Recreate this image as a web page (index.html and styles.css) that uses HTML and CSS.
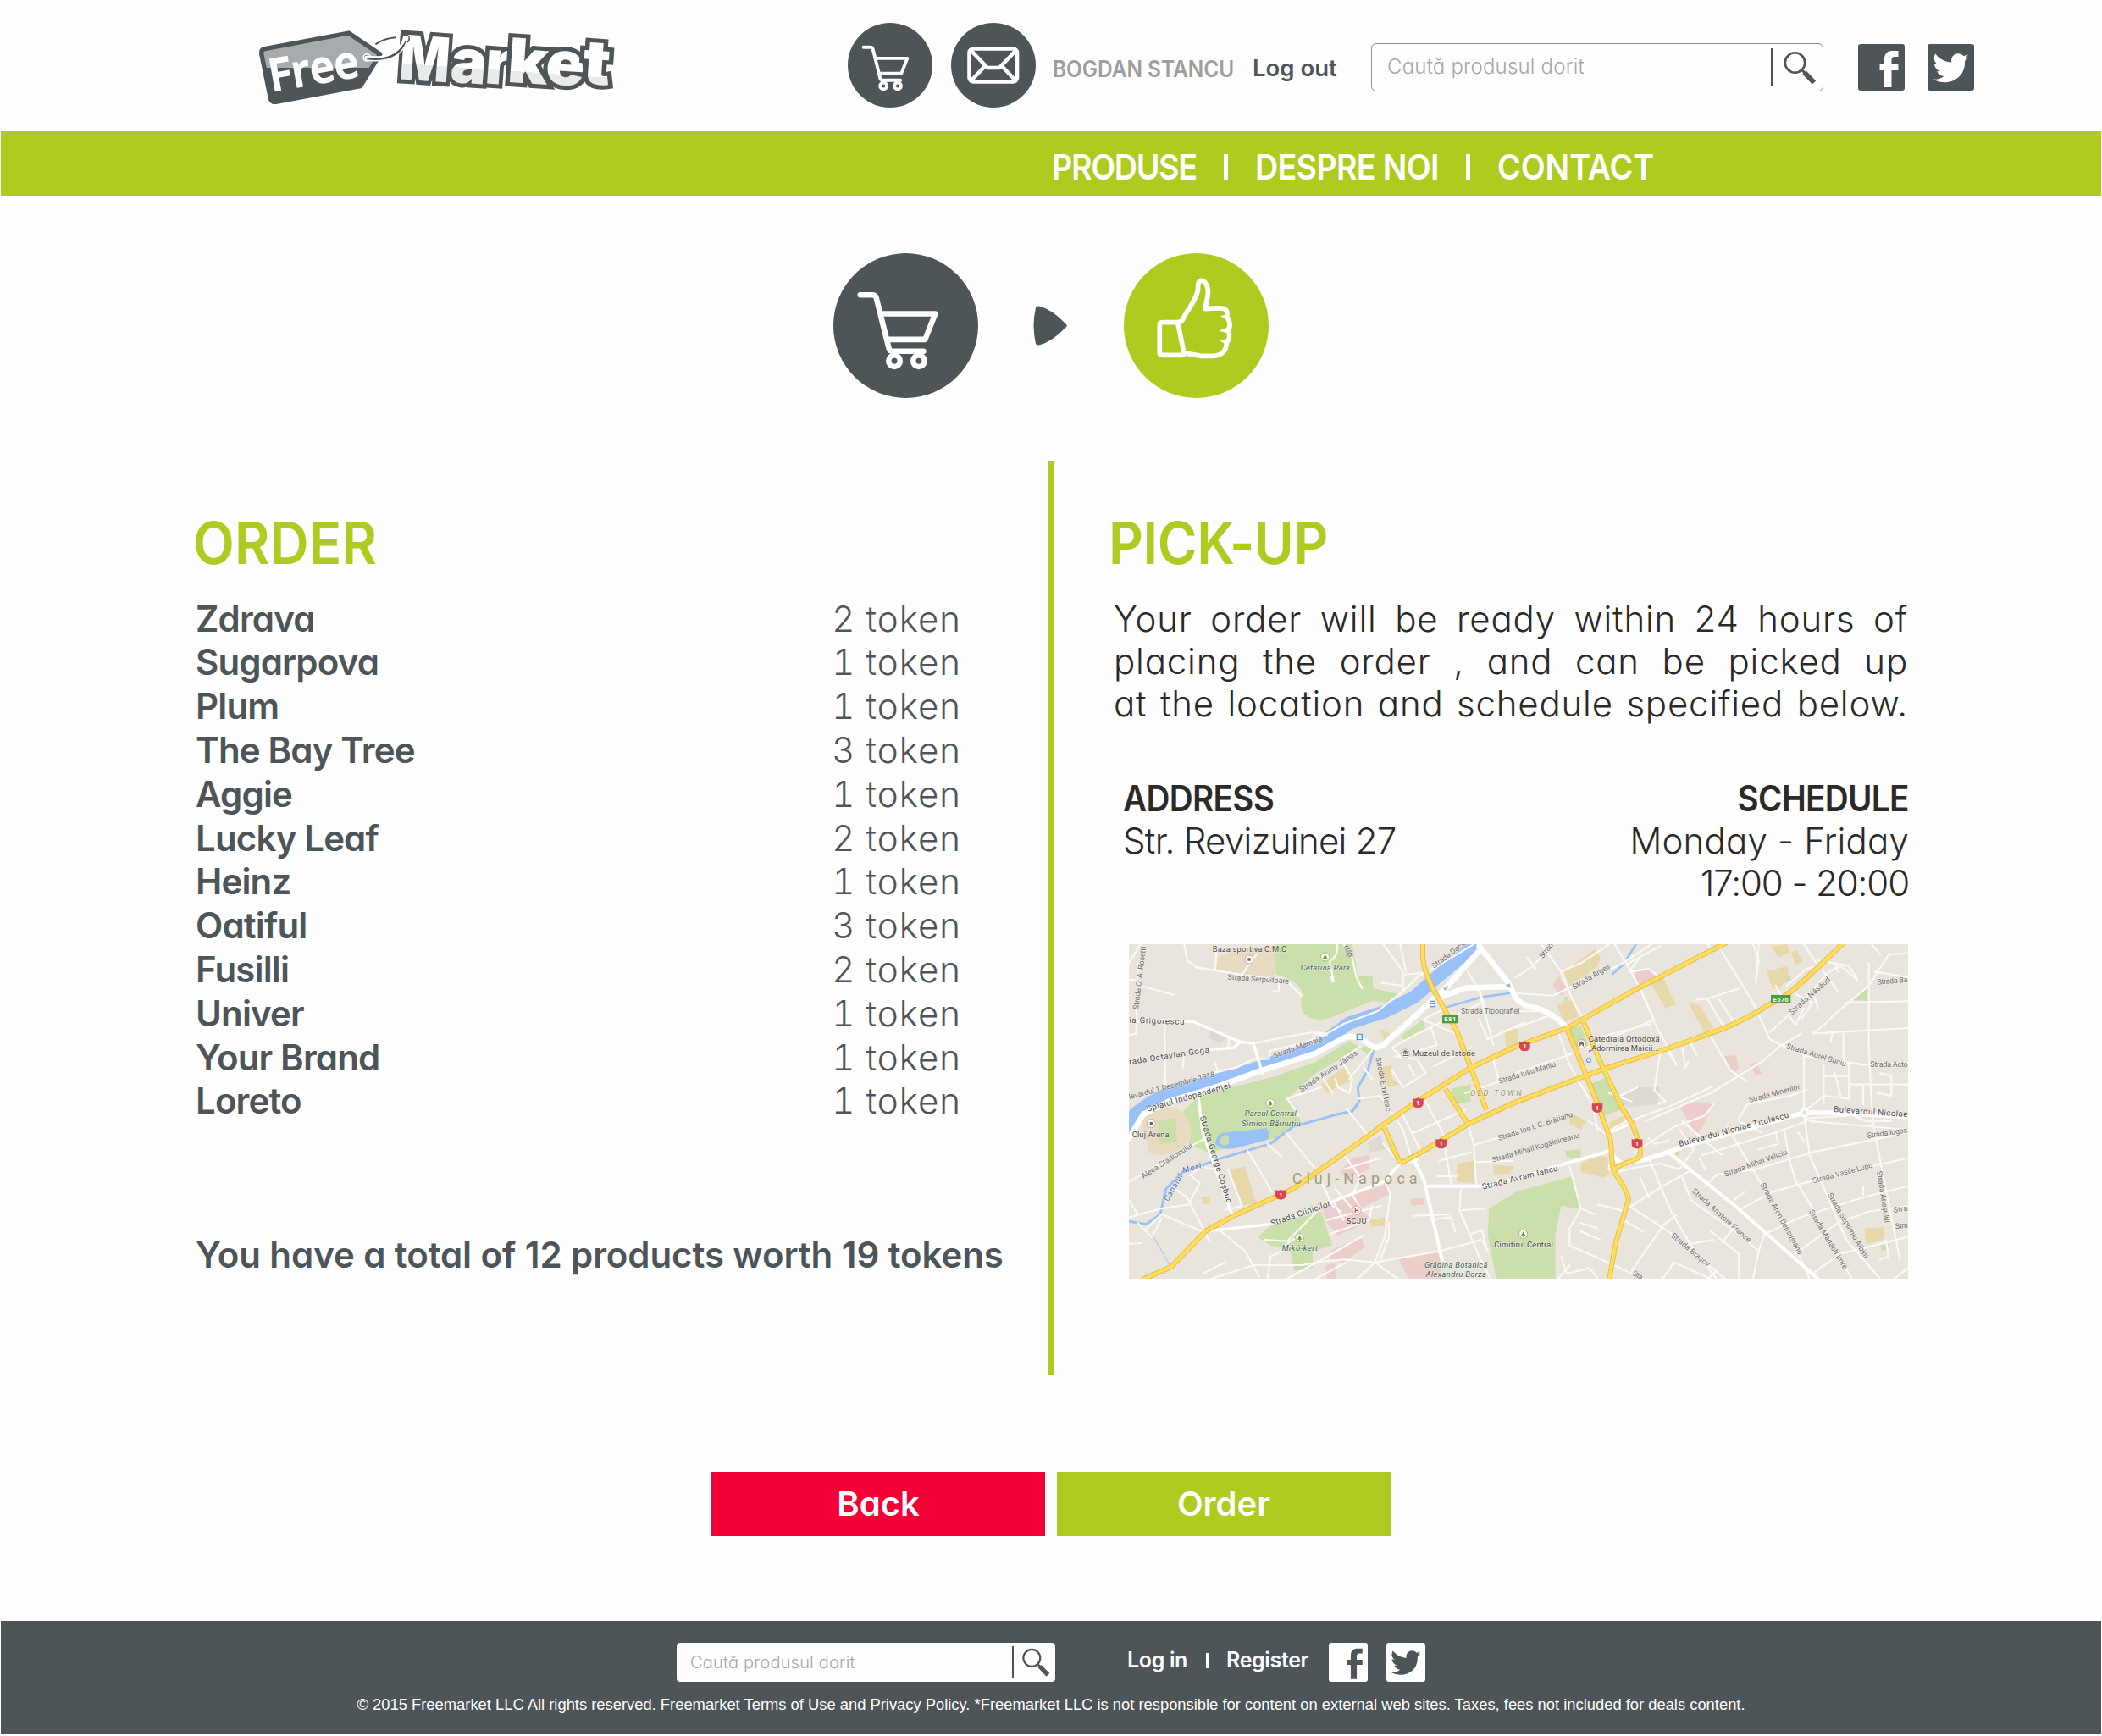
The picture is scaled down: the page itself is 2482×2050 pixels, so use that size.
FILE: index.html
```html
<!DOCTYPE html>
<html lang="ro">
<head>
<meta charset="utf-8">
<title>FreeMarket</title>
<link rel="stylesheet" href="styles.css">
</head>
<body>
<svg class="defs" width="0" height="0" aria-hidden="true">
  <symbol id="cart" viewBox="0 0 172 172">
    <g fill="none" stroke="#fefefe" stroke-width="6.6" stroke-linecap="round" stroke-linejoin="round">
      <path d="M32 49.500H46Q50 49.500 51 53L66 113Q67 116.500 71 116.500H107M59 72H121L109 102.500H65"/>
      <circle cx="72.500" cy="128" r="6.800"/><circle cx="101.500" cy="128" r="6.800"/>
    </g>
  </symbol>
  <symbol id="loupe" viewBox="0 0 40 40">
    <circle cx="14.500" cy="14" r="11.700" fill="none" stroke="#4e5558" stroke-width="2.600"/>
    <path d="M22.500 22.500L26 26" stroke="#4e5558" stroke-width="3"/>
    <path d="M25.500 25.500L37 37.500" stroke="#4e5558" stroke-width="6"/>
  </symbol>
  <symbol id="facebook" viewBox="0 0 55 55">
    <path d="M31 51V31H25.500V24H31V18C31 11 35 8 40.500 8H47.500V15H43C40.500 15 39.500 16.500 39.500 19V24H47.500V31H39.500V51Z"/>
  </symbol>
  <symbol id="twitter" viewBox="0 0 55 55">
    <path d="M48 15.500C46.500 16.200 45.500 16.500 44.300 16.700C46 15.500 46.800 14.200 47.500 12.200C45.800 13.200 44.500 13.700 42.500 14.100C36 7.500 26.500 13 28.300 21.500C20.500 21 14.500 17.500 9.200 11.500C6.500 16.500 7.700 20.800 11.700 24C10.500 24 9 23.500 7.900 22.800C8 27 10.500 30.500 15 31.800C13.500 32.200 12.500 32.200 11.200 32C12.500 35.500 15.500 37.800 19.300 38C15.500 41 11.500 42 6.500 41.600C22 50.500 45 42.500 44 20C45.700 18.700 47 17.300 48 15.500Z"/>
  </symbol>
</svg>

<header class="top">
  <svg class="logo" viewBox="0 0 1440 390">
    <defs>
      <linearGradient id="shine" gradientUnits="userSpaceOnUse" x1="0" y1="90" x2="0" y2="310">
        <stop offset=".48" stop-color="#fefefe"/><stop offset=".48" stop-color="#e9ebeb"/>
      </linearGradient>
      <linearGradient id="tag" gradientUnits="userSpaceOnUse" x1="0" y1="80" x2="0" y2="340">
        <stop offset=".5" stop-color="#a6abad"/><stop offset=".5" stop-color="#4e5558"/>
      </linearGradient>
    </defs>
    <path d="M86 160Q84 146 98 143L395 87L506 162L437 275L137 331Q121 333 118 318Z" fill="url(#tag)" stroke="#4e5558" stroke-width="16" stroke-linejoin="round"/>
    <g class="logo-free" transform="rotate(-10 130 290)"><text x="122" y="293" textLength="320" lengthAdjust="spacingAndGlyphs">Free</text></g>
    <path d="M490 127Q520 106 562 103" fill="none" stroke="#4e5558" stroke-width="6"/>
    <g class="logo-market" transform="translate(-1 -2) rotate(4 575 250)">
      <text y="252"><tspan x="573" textLength="178" lengthAdjust="spacingAndGlyphs">M</tspan></text>
      <text y="250"><tspan x="754" textLength="128" lengthAdjust="spacingAndGlyphs">a</tspan></text>
      <text y="246"><tspan x="877" textLength="90" lengthAdjust="spacingAndGlyphs">r</tspan></text>
      <text y="236"><tspan x="955" textLength="143" lengthAdjust="spacingAndGlyphs">k</tspan></text>
      <text y="232"><tspan x="1090" textLength="138" lengthAdjust="spacingAndGlyphs">e</tspan></text>
      <text y="222"><tspan x="1222" textLength="97" lengthAdjust="spacingAndGlyphs">t</tspan></text>
    </g>
    <circle cx="460" cy="174" r="15" fill="#fefefe"/><circle cx="460" cy="174" r="10" fill="#4e5558"/>
    <circle cx="595" cy="107" r="17" fill="#4e5558"/><circle cx="597" cy="106" r="10" fill="#fefefe"/>
    <path d="M460 176C530 185 580 165 597 106" fill="none" stroke="#fefefe" stroke-width="19" stroke-linecap="round"/>
    <path d="M460 177C530 185 580 165 595 115" fill="none" stroke="#4e5558" stroke-width="8"/>
    <path d="M454 172C530 181 575 155 597 106" fill="none" stroke="#fefefe" stroke-width="6"/>
  </svg>
  <a class="round"><svg viewBox="0 0 172 172"><use href="#cart"/></svg></a>
  <a class="round round-mail"><svg viewBox="0 0 100 100">
    <g fill="none" stroke="#fefefe" stroke-width="4.600" stroke-linejoin="round">
      <rect x="21.500" y="30.500" width="56.500" height="39" rx="5"/>
      <path d="M23 32L43 53H57L77 32M23 69L40 51M77 69L60 51"/>
    </g></svg></a>
  <span class="user caps">BOGDAN STANCU</span>
  <a class="logout">Log out</a>
  <div class="search"><span>Caută produsul dorit</span><i></i><svg><use href="#loupe"/></svg></div>
  <a class="social"><svg><use href="#facebook"/></svg></a>
  <a class="social"><svg><use href="#twitter"/></svg></a>
</header>

<nav class="menu">
  <span class="m1"><a class="caps">PRODUSE</a></span><i></i><span class="m2"><a class="caps">DESPRE NOI</a></span><i></i><span class="m3"><a class="caps">CONTACT</a></span>
</nav>

<main>
  <div class="steps">
    <div class="step"><svg viewBox="0 0 172 172"><use href="#cart"/></svg></div>
    <svg class="arrow" viewBox="0 0 40 47"><path d="M3 2Q4 0 7 .5Q22 4 39 22Q40.500 23.500 39 25Q22 43 7 46.500Q4 47 3 45Q-2 24 3 2Z" fill="#4e5558"/></svg>
    <div class="step step-done"><svg viewBox="0 0 172 172">
      <g fill="none" stroke="#fefefe" stroke-width="5.800" stroke-linejoin="round">
        <path d="M64 82H46Q42.500 82 42.500 85.500V117.500Q42.500 121 46 121H69Q72 121 71.300 118Z"/>
        <path d="M64 82Q69 82 71 77C75 67 84 60 88 44C88 37 88 32.500 92.500 32.500C98 33 100 41 100 46C100 54 97 60 97 66C103 65.500 112 65 117 65.500C122 66 124 70 122 76C126 79 127 87 124 91.500C126 97 125.500 103 122 106C122 115 117 121.500 106 122H92L72 118.500"/>
      </g>
      <path d="M117 75L122 74V78ZM116 92L124 89V94ZM116 104L122 103V108Z" fill="#fefefe" stroke="#fefefe" stroke-width="2"/>
    </svg></div>
  </div>

  <div class="columns">
    <section class="order">
      <h2 class="caps">ORDER</h2>
      <ul>
        <li><b>Zdrava</b><span>2 token</span></li>
        <li><b>Sugarpova</b><span>1 token</span></li>
        <li><b>Plum</b><span>1 token</span></li>
        <li><b>The Bay Tree</b><span>3 token</span></li>
        <li><b>Aggie</b><span>1 token</span></li>
        <li><b>Lucky Leaf</b><span>2 token</span></li>
        <li><b>Heinz</b><span>1 token</span></li>
        <li><b>Oatiful</b><span>3 token</span></li>
        <li><b>Fusilli</b><span>2 token</span></li>
        <li><b>Univer</b><span>1 token</span></li>
        <li><b>Your Brand</b><span>1 token</span></li>
        <li><b>Loreto</b><span>1 token</span></li>
      </ul>
      <p class="total">You have a total of 12 products worth 19 tokens</p>
    </section>
    <section class="pickup">
      <h2 class="caps">PICK-UP</h2>
      <p class="note">Your order will be ready within 24 hours of<br>placing the order , and can be picked up<br>at the location and schedule specified below.</p>
      <div class="where">
        <div><b class="caps">ADDRESS</b><span class="street">Str. Revizuinei 27</span></div>
        <div class="when"><b class="caps">SCHEDULE</b><span>Monday - Friday</span><span class="hours">17:00 - 20:00</span></div>
      </div>
      <svg class="map" viewBox="39 33 2760 1185" preserveAspectRatio="none">
        <rect x="39" y="33" width="2760" height="1185" fill="#e9e5dd"/>

        <!-- parks -->
        <g fill="#cadfaa">
          <path d="M555 33H830L850 145H903V190L1000 210L960 240L900 235L760 290Q700 315 660 280Q640 250 655 210Q640 160 560 140Z"/>
          <path d="M290 570L560 500L700 450L820 375L860 400L700 490L600 580L650 660L560 720L320 770L250 740L260 690L230 625Z"/>
          <path d="M1000 360L1080 300L1090 335L1020 375ZM855 400L895 390L920 400L890 430Z"/>
          <path d="M140 655L205 650L210 730L150 745Z"/>
          <path d="M495 1070L540 1030L720 980L760 1100L690 1120V1180L625 1190L610 1110L540 1100Z"/>
          <path d="M1315 970L1410 910L1610 855L1640 970L1570 960L1550 1060V1218H1340L1310 1060Z"/>
          <path d="M1600 330L1640 320L1670 400L1610 390ZM1670 530L1740 500L1780 620L1720 640Z"/>
          <path d="M1590 235L1575 225L1595 245ZM1640 115L1655 108L1675 130L1655 145ZM1575 225L1590 218L1600 238L1585 248ZM2360 150L2380 145L2385 160L2350 175ZM2600 230L2660 185V235Z"/>
          <path d="M1180 545L1250 530V590L1200 600ZM1585 765L1640 760L1638 790L1590 792ZM1970 770L1990 760L1985 785ZM2700 1100L2730 1095L2725 1115L2705 1118Z"/>
        </g>
        <g fill="#e8dac0">
          <path d="M355 80L400 60L555 40V150L440 140L345 130Z"/>
          <path d="M80 660Q150 580 230 630Q280 690 240 740Q180 800 110 770Z"/>
        </g>
        <path d="M140 655L205 650L210 730L150 745Z" fill="#cadfaa"/>
        <g fill="#e6d8a8">
          <path d="M720 530L800 470L830 510L740 560ZM925 330L965 350L945 375ZM930 470L970 460V510L1000 530L960 540L930 500ZM1370 350L1415 330L1420 390L1375 400Z"/>
          <path d="M390 835L450 820L490 950L440 960ZM295 930L325 925L330 950L305 955ZM890 1010L945 1000V1030L900 1035ZM1200 810L1260 800L1265 880L1200 875ZM1330 815L1400 820L1390 845L1330 850Z"/>
          <path d="M1580 130L1690 50L1710 80L1700 110L1600 180ZM1555 250L1610 230L1630 290L1580 310ZM1880 160L1930 150L1975 245L1940 260ZM2020 240L2060 250L2110 330L2080 350Z"/>
          <path d="M2315 40L2370 33L2380 60L2340 80ZM2385 60L2405 55L2425 95L2400 110ZM2300 130L2370 110L2380 130L2340 200L2310 170Z"/>
          <path d="M1640 810L1700 780L1735 790L1740 850L1720 860L1640 840ZM1600 630L1660 660L1640 690L1600 670ZM2645 1040L2715 1035V1080L2650 1095ZM1740 665L1790 640V680L1745 695Z"/>
        </g>
        <g fill="#ebcdcb">
          <path d="M785 840L830 790L890 780V830L820 860ZM720 960L960 880V920L860 970L900 1010L780 1065L740 1020ZM750 1120L860 1070L875 1105L800 1160L750 1150Z"/>
          <path d="M995 1150L1125 1120L1145 1140V1218H1030ZM1035 935L1085 932V955L1040 960ZM735 1170L770 1165V1218H740Z"/>
          <path d="M1540 180L1560 145L1590 190L1570 215ZM1830 130L1880 120L1905 150L1840 180ZM2150 430L2190 425L2200 480L2170 490ZM2240 460L2260 450L2280 490L2260 500Z"/>
          <path d="M1990 610L2040 590L2110 600L2070 680L2050 710Z"/>
        </g>
        <g fill="#dcd8d2"><path d="M325 335L390 360L360 385L325 365ZM1775 570L1830 540L1920 540L1910 600L1800 610ZM885 735L930 710L945 760L890 770Z"/></g>

        <!-- water -->
        <g fill="none" stroke="#99c1f8" stroke-linejoin="round">
          <path d="M20 700L60 635Q110 590 200 553L340 518L500 470L650 415L730 378L820 312L950 270L1050 220L1130 150L1270 33" stroke-width="46"/>
          <path d="M905 410L885 480L850 540L855 590L830 625L780 635L620 680L540 740L370 790L230 840L170 900L150 990L100 1025L39 1015" stroke-width="9"/>
          <path d="M1150 260L1290 220L1400 205M1750 140L1790 105L1835 33" stroke-width="8"/>
          <path d="M120 1060L190 1180" stroke-width="3"/>
        </g>
        <path d="M345 740Q350 700 385 700L525 685Q545 700 530 725L440 750Q370 770 345 740Z" fill="#99c1f8"/>
        <path d="M360 735Q362 710 390 708L395 738Q375 755 360 735Z" fill="#cadfaa"/>

        <!-- side streets -->
        <g class="streets">
          <path d="M235 33L245 90L280 115L370 130L500 150L600 165L650 215M345 125L350 40M440 140L490 70M80 180L200 213M39 100L80 33M39 355L65 350L70 100M165 320L168 530M39 160H60"/>
          <path d="M775 33Q785 70 750 95L765 165M755 150L760 165M800 33L830 80L845 150L865 190M570 170V200H550M480 385L600 360L690 345L740 350L800 315L920 270L1010 200L1060 150L1150 100L1260 33"/>
          <path d="M730 355L650 385L540 410L535 440L480 440L420 470L330 490M230 470L235 420M390 400L395 360L430 375M345 455L355 485M690 385L695 350L740 355"/>
          <path d="M935 170L1010 180M940 33L1010 130L1010 195M1015 140L1080 135M1000 33L1020 130M1240 130L1280 200L1330 390M1280 190L1300 260M1160 260L1080 300L1200 350M1110 330L1130 390L1000 430L970 400L1060 350L1290 240"/>
          <path d="M970 480L1010 540L1090 490L1060 440L980 430M860 395L790 440L830 510L820 560L780 540L770 510M900 410L820 510M720 500L760 560M600 580L640 640M600 580L720 540M1120 465L1250 400M1280 300L1310 370L1440 310"/>
          <path d="M870 470L900 510M850 580L930 570L960 615L1010 690L1040 790M1030 460L1050 500M1330 440L1350 520L1230 560M1090 590L1150 700L1180 880M1050 700L1230 620M1240 670L1260 740L1270 890M1260 745L1440 690M1270 805L1400 800M1140 800L1250 770M1130 855H1200M1000 620L1040 700L1080 780"/>
          <path d="M810 615L890 715M595 700L700 830L760 960L790 980M530 740L580 785M460 765L500 830L545 910M390 830L440 960L380 975M39 875L300 725M39 1000L150 970L250 955L290 880L255 850L300 820L360 835M200 900L245 930L325 1085"/>
          <path d="M39 940L70 990M100 1040L155 990L310 1055M70 1020L120 1070L155 1005M39 1095L85 1092M365 1050L450 1120L500 1210M300 1200L380 1160M330 1218L480 1170L650 1170L740 1155L800 1150L910 1160L1140 1120L1290 1080L1310 1120"/>
          <path d="M520 1080L600 1085L700 985M590 1100L620 1080L655 1060M530 1218L540 1140L620 1100M600 1218L740 1140L870 1065M700 1218L810 1160M850 1218L910 1160L990 1218M950 880L965 920L945 1070L910 1160M940 740L1000 810M960 1020V1070L930 1150"/>
          <path d="M805 785L860 860L830 920L860 970M800 830L930 790M770 900L840 980M740 1010L930 960M750 1060L890 1010L900 960M760 940L800 1010M1045 995L1180 990M1110 1010L1180 1000L1195 1050M1215 905L1210 975L1280 1140L1320 1218M1220 975L1300 970M1250 1060L1290 1045L1305 1110"/>
          <path d="M1410 270H1490M1410 150L1470 110L1540 33M1450 80L1480 120M1500 33L1570 130L1610 230L1650 300M1570 130L1640 100L1740 33M1410 207L1540 215L1680 150L1780 105L1890 33M1760 33L1800 100L1850 190L1900 310L1970 440M1810 130L1850 80M1800 105L1920 40M1410 330L1530 285M1410 490L1610 420M1560 345L1600 460L1680 600L1700 690"/>
          <path d="M1850 190L1900 300L1660 400M1710 360L1890 315M1820 130L1880 120L1920 150M2090 33L2100 60M2140 60L2250 240L2310 370L2360 395M2250 33L2270 90L2260 170L2270 33M2050 230L2090 225L2200 190M2090 230L2150 330M2130 230L2190 320M2100 360L2170 480L2230 520M1940 400L1980 460M2000 400L2010 470L2020 450M2030 385L2050 425"/>
          <path d="M1870 660L2100 560L2280 450L2350 390L2420 350M2200 650L2230 600L2380 570L2440 550M2330 180L2360 230M2370 180L2440 120L2480 110L2430 33M2480 90L2590 110L2620 160M2540 100L2550 130M2500 130L2550 200M2310 345L2400 260L2520 130L2560 110L2620 160M2360 395L2440 430L2640 460L2799 455"/>
          <path d="M2380 290L2400 320L2430 260M2400 210L2460 240L2420 300M2460 200L2480 260M2460 350L2500 320L2540 280L2660 180L2730 70L2799 65M2660 100V400L2670 600L2680 700L2720 900L2770 1150M2580 240L2799 235M2460 350L2799 330M2430 400V630L2450 780L2580 1080L2700 1218M2680 130L2799 150M2670 33L2700 70"/>
          <path d="M2500 460V600M2500 500H2590M2540 490L2560 570M2570 350V460M2590 460V580L2500 570L2440 620M2590 530H2799M2640 600V530M2690 560L2740 570V500L2700 490M2530 350L2525 380"/>
          <path d="M1810 660L1950 610L2100 540M1830 770L1970 680L2080 640L2110 600M1740 560L1820 590M1780 570L1840 540M1920 420L1900 550L1940 590L1910 600M2450 660L2799 690M2580 630L2650 660H2740M2440 650L2750 630"/>
          <path d="M2000 660L2080 730L2140 780M1880 720L1900 740L1950 730M2160 680L2200 750L2260 850L2330 970L2410 1130L2450 1218M2200 660L2280 700M2070 780L2330 700L2440 660M2060 790L2080 830M2330 700L2340 740L2270 760M2360 690L2380 800L2400 870L2450 950L2520 1080L2600 1218M2410 700L2430 730"/>
          <path d="M2080 890L2120 850L2260 830L2460 770L2799 700M2200 975L2320 910L2500 860L2799 790M2180 940L2220 910M2290 1060L2420 1000L2640 930L2799 890M2400 1130L2550 1020L2660 980L2799 960M2460 1200L2560 1130L2799 1070M2640 890V920M2720 1080L2730 1140L2700 1150M2799 1180L2750 1218"/>
          <path d="M1770 840L1830 825L1920 810L1990 830L2040 760L1990 690M1820 960L1930 890L2020 840M1880 930L1850 860M1880 790L1960 980L2030 1100L2120 1218M2000 860L2030 940L2200 1060L2270 1120M1810 960L1950 1050L2150 1218M1700 955L1800 980M1790 1010L1860 1050"/>
          <path d="M1820 1190L1930 1030L1980 990M1960 1060L2000 1100L2110 1080M2100 1050L2200 1130V1218M2140 1090L2180 1040M2290 1060L2270 1120L2250 1218M1930 1218L1970 1160L2100 1218M2120 1190L2090 1218"/>
          <path d="M1600 820L1640 970L1600 1040L1600 1100L1690 1140L1860 1218M1640 970L1690 990M1640 1050L1710 1080M1700 1040L1640 1020M1570 1140L1590 1200L1670 1180L1700 1218M1560 1218L1600 1170M1670 660L1750 720M1730 700L1800 660"/>
        </g>

        <!-- main streets -->
        <g class="avenues">
          <path d="M1285 50L1160 190L1050 290L940 390Q910 410 880 380Q830 345 790 370L700 420L510 480L330 545L180 590L90 635L39 720"/>
          <path d="M1280 40L1380 165L1410 225Q1440 255 1480 258Q1550 280 1592 332M1130 225L1230 188L1390 183"/>
          <path d="M1955 768L1870 795L1790 810Q1755 800 1745 760M1955 768L2000 750L2200 695L2430 630H2540L2799 645" stroke-width="17"/>
          <path d="M1950 770L2180 955L2480 1219M1050 800L1085 870L1150 1160M1000 810L1060 795M1090 890H1290L1410 865L1570 815L1745 765" stroke-width="12"/>
          <path d="M310 1050L540 1025L760 945L940 875L1000 810M39 308L160 302L270 308L430 378L480 385L512 490M280 410L410 400L435 378M285 570L300 700L405 995M1745 700L1810 670M1740 830L1745 800" stroke-width="10"/>
        </g>
        <circle cx="2432" cy="630" r="13" fill="#e9e5dd" stroke="#fefefe" stroke-width="9"/>

        <!-- national roads: casing, then fill -->
        <g fill="none" stroke="#e8bb4a" stroke-width="18" stroke-linejoin="round"><path d="M1080 20V80Q1085 140 1130 215L1200 340L1250 470L1305 620M85 1222L190 1175L310 1050L410 995L620 900L890 710L940 672L1060 590L1250 470L1410 395L1590 330L1840 190L2160 25M1000 810L1075 770L1240 670L1410 592L1720 475L1940 405L2150 330Q2240 290 2310 245Q2350 230 2410 180L2580 20M940 675L1000 810M1160 545L1240 670M1590 330L1660 500L1705 615L1745 725L1750 795Q1750 830 1765 850Q1820 930 1805 950L1765 1085L1740 1222M1645 300L1720 475L1790 620L1820 665L1850 745V785Q1840 795 1800 808Q1765 820 1756 835"/></g>
        <g fill="none" stroke="#fedd5a" stroke-width="12" stroke-linejoin="round"><path d="M1080 20V80Q1085 140 1130 215L1200 340L1250 470L1305 620M85 1222L190 1175L310 1050L410 995L620 900L890 710L940 672L1060 590L1250 470L1410 395L1590 330L1840 190L2160 25M1000 810L1075 770L1240 670L1410 592L1720 475L1940 405L2150 330Q2240 290 2310 245Q2350 230 2410 180L2580 20M940 675L1000 810M1160 545L1240 670M1590 330L1660 500L1705 615L1745 725L1750 795Q1750 830 1765 850Q1820 930 1805 950L1765 1085L1740 1222M1645 300L1720 475L1790 620L1820 665L1850 745V785Q1840 795 1800 808Q1765 820 1756 835"/></g>

        <!-- badges -->
        <g fill="#4f9a3c"><rect x="1149" y="284" width="56" height="29"/><rect x="2313" y="213" width="70" height="28"/></g>
        <g fill="#d8474f"><path id="shield" d="M1422 378Q1432 382 1441 376Q1450 382 1460 378V398Q1458 410 1441 412Q1424 410 1422 398Z"/>
          <use href="#shield" x="-378" y="201"/><use href="#shield" x="-296" y="345"/><use href="#shield" x="257" y="218"/><use href="#shield" x="398" y="345"/><use href="#shield" x="-864" y="526"/></g>
        <g class="pins">
          <circle cx="734" cy="78" r="15"/><circle cx="465" cy="87" r="15"/><circle cx="540" cy="596" r="15"/><circle cx="118" cy="668" r="15"/><circle cx="1018" cy="420" r="15"/><circle cx="644" cy="1073" r="15"/><circle cx="846" cy="975" r="15"/><circle cx="1436" cy="1060" r="15"/><circle cx="1642" cy="386" r="15"/>
        </g>
        <path d="M734 68L742 84H726ZM540 586L548 602H532ZM644 1063L652 1079H636ZM1436 1050L1444 1066H1428ZM732 82H736V88H732ZM538 600H542V606H538ZM642 1077H646V1083H642ZM1434 1064H1438V1070H1434Z" fill="#6aa60c"/>
        <path d="M460 82H470V92H460ZM113 663H123V673H113ZM1010 413L1018 408L1026 413V416H1010ZM1010 426H1026V429H1010ZM1012 418H1015V424H1012ZM1017 418H1020V424H1017ZM1022 418H1025V424H1022ZM1634 394V384L1642 376L1650 384V394H1645V388H1639V394Z" fill="#8a5a4a"/>
        <g fill="#fefefe" stroke="#4c9bea" stroke-width="4"><path d="M1106 235H1123V254H1106ZM1106 244H1123M847 352H865V371H847ZM847 361H865"/><circle cx="1668" cy="444" r="7"/></g>
        <path d="M1152 190L1172 178L1160 198ZM1372 178L1392 190L1388 172Z" fill="#a9b5c6"/>
        <g class="badge">
          <text x="1177" y="307" textLength="42">E81</text><text x="2348" y="236" textLength="54">E576</text>
          <text x="1441" y="403">1</text><text x="1063" y="604">1</text><text x="1145" y="748">1</text><text x="1698" y="621">1</text><text x="1839" y="748">1</text><text x="577" y="929">1</text><text x="846" y="984" class="hospital">H</text>
        </g>

        <!-- labels -->
        <g class="labels">
          <text x="335" y="59" textLength="262">Baza sportiva C.M.C</text>
          <text x="1043" y="430" textLength="223">Muzeul de Istorie</text>
          <text x="1667" y="378" textLength="252">Catedrala Ortodoxă</text>
          <text x="1667" y="411" textLength="250">„Adormirea Maicii...</text>
          <text x="50" y="716" textLength="132">Cluj Arena</text>
          <text x="809" y="1022" textLength="72">SCJU</text>
          <text x="1333" y="1108" textLength="208">Cimitirul Central</text>
          <g font-size="29">
            <text x="40" y="311" textLength="195" transform="rotate(2 40 311)">ia Grigorescu</text>
            <text x="41" y="460" textLength="287" transform="rotate(-9 41 460)">rada Octavian Goga</text>
            <text x="106" y="626" textLength="306" transform="rotate(-16 106 626)">Splaiul Independenței</text>
            <text x="290" y="646" textLength="320" transform="rotate(72.500 290 646)">Strada George Coșbuc</text>
            <text x="545" y="1032" textLength="222" transform="rotate(-19 545 1032)">Strada Clinicilor</text>
            <text x="1293" y="902" textLength="275" transform="rotate(-14 1293 902)">Strada Avram Iancu</text>
            <text x="1990" y="750" textLength="402" transform="rotate(-15 1990 750)">Bulevardul Nicolae Titulescu</text>
            <text x="2535" y="627" textLength="262" transform="rotate(4 2535 627)">Bulevardul Nicolae</text>
          </g>
        </g>
        <g class="labels lanes">
          <text x="72" y="265" textLength="225" transform="rotate(-83 72 265)">Strada C. A. Rosetti</text>
          <text x="388" y="158" textLength="218" transform="rotate(4 388 158)">Strada Serpuitoare</text>
          <text x="800" y="40" textLength="45" transform="rotate(68 800 40)">etății</text>
          <text x="1120" y="120" textLength="148" transform="rotate(-37 1120 120)">Strada Dacia</text>
          <text x="1215" y="278" textLength="208">Strada Tipografiei</text>
          <text x="555" y="437" textLength="182" transform="rotate(-20 555 437)">Strada Mamaia</text>
          <text x="41" y="583" textLength="315" transform="rotate(-15 41 583)">levardul 1 Decembrie 1918</text>
          <text x="650" y="558" textLength="242" transform="rotate(-34 650 558)">Strada Arany János</text>
          <text x="913" y="435" textLength="195" transform="rotate(79 913 435)">Strada Emil Isac</text>
          <text x="1352" y="527" textLength="210" transform="rotate(-17 1352 527)">Strada Iuliu Maniu</text>
          <text x="1350" y="729" textLength="276" transform="rotate(-18 1350 729)">Strada Ion I. C. Brătianu</text>
          <text x="1328" y="806" textLength="320" transform="rotate(-16 1328 806)">Strada Mihail Kogălniceanu</text>
          <text x="90" y="865" textLength="210" transform="rotate(-33 90 865)">Aleea Stadionului</text>
          <text x="1505" y="85" textLength="62" transform="rotate(-52 1505 85)">Strad</text>
          <text x="1617" y="194" textLength="150" transform="rotate(-31 1617 194)">Strada Argeș</text>
          <text x="2388" y="284" textLength="185" transform="rotate(-42 2388 284)">Strada Năsăud</text>
          <text x="2690" y="176" textLength="108" transform="rotate(-5 2690 176)">Strada Ba</text>
          <text x="2366" y="402" textLength="220" transform="rotate(17 2366 402)">Strada Aurel Suciu</text>
          <text x="2665" y="468" textLength="133">Strada Acto</text>
          <text x="2238" y="594" textLength="186" transform="rotate(-15 2238 594)">Strada Minerilor</text>
          <text x="2655" y="720" textLength="144" transform="rotate(-8 2655 720)">Strada Iugos</text>
          <text x="2152" y="857" textLength="235" transform="rotate(-20 2152 857)">Strada Mihai Veliciu</text>
          <text x="2463" y="880" textLength="220" transform="rotate(-15 2463 880)">Strada Vasile Lupu</text>
          <text x="2688" y="838" textLength="185" transform="rotate(81 2688 838)">Strada Arieșului</text>
          <text x="2275" y="884" textLength="285" transform="rotate(61.500 2275 884)">Strada Aron Densușianu</text>
          <text x="2032" y="910" textLength="270" transform="rotate(42 2032 910)">Strada Anatole France</text>
          <text x="2447" y="980" textLength="240" transform="rotate(59 2447 980)">Strada Madách Imre</text>
          <text x="2513" y="920" textLength="262" transform="rotate(60 2513 920)">Strada Septimiu Albini</text>
          <text x="1958" y="1068" textLength="170" transform="rotate(40 1958 1068)">Strada Brașov</text>
          <text x="1820" y="1204" textLength="38" transform="rotate(30 1820 1204)">Stra</text>
          <text x="2748" y="984" textLength="50" transform="rotate(-8 2748 984)">Stra</text>
          <text x="2755" y="1042" textLength="44" transform="rotate(-8 2755 1042)">Stra</text>
        </g>
        <g class="labels parks">
          <text x="647" y="125" textLength="175">Cetatuia Park</text>
          <text x="449" y="641" textLength="183">Parcul Central</text>
          <text x="439" y="677" textLength="208">Simion Bărnuțiu</text>
          <text x="581" y="1119" textLength="127">Mikó-kert</text>
          <text x="1086" y="1178" textLength="223">Grădina Botanică</text>
          <text x="1091" y="1212" textLength="214">Alexandru Borza</text>
          <text x="1248" y="570" textLength="182" fill="#9a9682">OLD TOWN</text>
          <text x="178" y="945" textLength="105" transform="rotate(-60 178 945)" fill="#3f6fae">Canalul</text>
          <text x="232" y="844" textLength="78" transform="rotate(-16 232 844)" fill="#3f6fae">Morii</text>
        </g>
        <text class="city" x="617" y="882" textLength="444">Cluj-Napoca</text>
      </svg>
    </section>
  </div>
  <div class="actions"><a class="back">Back</a><a>Order</a></div>
</main>

<footer>
  <div class="bar">
    <div class="search search-small"><span>Caută produsul dorit</span><i></i><svg><use href="#loupe"/></svg></div>
    <a class="login">Log in</a><i class="sep"></i><a class="register">Register</a>
    <a class="social"><svg><use href="#facebook"/></svg></a>
    <a class="social"><svg><use href="#twitter"/></svg></a>
  </div>
  <p>© 2015 Freemarket LLC All rights reserved. Freemarket Terms of Use and Privacy Policy. *Freemarket LLC is not responsible for content on external web sites. Taxes, fees not included for deals content.</p>
</footer>
</body>
</html>
```
FILE: styles.css
```css
* { box-sizing: border-box; }
body { margin: 0; width: 2482px; height: 2050px; background: #fefefe; color: #4e5558; font-family: Inter, "Liberation Sans", sans-serif; font-feature-settings: "cv11"; overflow: hidden; }
i { display: block; flex: none; }
a, span, b { white-space: nowrap; }
.defs { position: absolute; }
.caps { display: block; transform: scaleX(.92); transform-origin: left; }

.top { height: 155px; padding-left: 280px; display: flex; align-items: flex-start; }
.top > * { flex: none; }
.logo { width: 480px; height: 130px; margin-top: 10px; }
.logo-free { font: 600 158px "Open Sans", sans-serif; fill: #fefefe; stroke: #fefefe; stroke-width: 5; }
.logo-market { font: 900 218px Inter, sans-serif; font-feature-settings: normal; fill: url(#shine); stroke: #4e5558; stroke-width: 30; paint-order: stroke; }
.round { width: 100px; height: 100px; margin: 27px 0 0 241px; border-radius: 50%; background: #4e5558; }
.round-mail { margin-left: 22px; }
.round svg { display: block; width: 100px; height: 100px; }
.user { width: 212px; margin: 65px 0 0 20px; font-size: 26.5px; line-height: 33px; font-weight: 600; color: #9d9e9e; letter-spacing: 0; }
.logout { width: 100px; margin: 64px 0 0 24px; font-size: 27.500px; line-height: 33px; font-weight: 600; }
.search { display: flex; width: 534px; height: 57px; margin: 51px 0 0 40px; border: 1.5px solid #8d9193; border-radius: 6px; background: #fefefe; }
.search > * { flex: none; }
.search span { width: 471px; padding-left: 18px; font-size: 24px; line-height: 54px; font-weight: 300; letter-spacing: .2px; color: #a3a7a8; }
.search i { width: 2px; height: 45px; margin-top: 5px; background: #4e5558; }
.search svg { width: 40px; height: 40px; margin: 8px 0 0 12px; }
.social { width: 55px; height: 55px; margin: 52px 0 0 41px; border-radius: 3px; background: #4e5558; fill: #fefefe; }
.social svg { display: block; width: 100%; height: 100%; }
.social + .social { margin-left: 27px; }

.menu { display: flex; align-items: center; height: 76px; margin: 0 1px; padding: 7px 0 0 1241px; background: #aecb1f; color: #fefefe; font-size: 41px; line-height: 60px; font-weight: 600; }
.menu span { flex: none; }
.menu i { width: 5px; height: 30px; background: #fefefe; margin: 0 32px 0 33px; }
.m1 { width: 170px; letter-spacing: -1.500px; }
.m2 { width: 216px; letter-spacing: -.800px; }
.m3 { width: 182px; letter-spacing: -.100px; }

.steps { display: flex; align-items: center; margin: 68px 0 0 984px; height: 171px; }
.step { width: 171px; height: 171px; border-radius: 50%; background: #4e5558; }
.step-done { background: #aecb1f; }
.step svg { display: block; width: 171px; height: 171px; }
.arrow { width: 40px; height: 47px; margin: 0 67px 0 65px; }

.columns { display: grid; grid-template-columns: 1238px 1244px; height: 1080px; margin-top: 74px; }
.order { padding: 62px 103px 0 231px; }
.pickup { padding: 62px 229px 0 71px; border-left: 6px solid #aecb1f; }
h2 { margin: 0 0 0 -3px; font-size: 69px; line-height: 70px; font-weight: 600; color: #aecb1f; letter-spacing: .300px; }
.pickup h2 { margin-left: -6px; letter-spacing: -.400px; }
ul { list-style: none; margin: 28.600px 0 0; padding: 0; font-size: 42px; line-height: 51.800px; }
li { display: flex; justify-content: space-between; }
b { font-weight: 600; }
li b { letter-spacing: -.850px; }
li span { font-weight: 300; font-feature-settings: "cv11", "tnum"; letter-spacing: 1px; }
.total { margin: 130px 0 0; font-size: 42px; line-height: 52px; font-weight: 600; letter-spacing: -.080px; white-space: nowrap; }
.note { margin: 29.500px 0 0; width: 938px; font-size: 42px; line-height: 50px; font-weight: 300; letter-spacing: .800px; text-align: justify; text-align-last: justify; color: #2b2a29; }
.where { display: flex; justify-content: space-between; margin: 62px -1px 0 11px; height: 150px; font-size: 42px; line-height: 50px; font-weight: 300; color: #2b2a29; }
.where div { display: flex; flex-direction: column; align-items: flex-start; }
.where .when { align-items: flex-end; letter-spacing: .200px; }
.where .caps { letter-spacing: -.700px; }
.when .caps { transform-origin: right; }
.street { letter-spacing: -.700px; }
.where .hours { letter-spacing: -1.100px; }

.map { display: block; width: 920px; height: 395px; margin: 47.500px 0 0 18px; font-family: Roboto, sans-serif; font-feature-settings: normal; }
.streets { fill: none; stroke: #faf9f6; stroke-width: 6.500px; stroke-linejoin: round; stroke-linecap: round; }
.avenues { fill: none; stroke: #fefefe; stroke-width: 20px; stroke-linejoin: round; stroke-linecap: round; }
.pins { fill: #fefefe; stroke: #a5a49c; stroke-width: 2.500px; }
.labels { font-size: 28px; fill: #4a4a4a; stroke: #f4f2ed; stroke-width: 4px; stroke-opacity: .6; paint-order: stroke; stroke-linejoin: round; }
.lanes { font-size: 27px; fill: #6f6f6f; }
.parks { font-style: italic; fill: #3c6350; }
.badge { font-size: 23px; font-weight: 700; fill: #fefefe; text-anchor: middle; }
.hospital { fill: #d93434; }
.city { font-size: 54px; fill: #a29b80; }

.actions { display: flex; gap: 14px; margin: 114px 0 0 840px; }
.actions a { width: 394px; height: 76px; background: #aecb1f; color: #fefefe; font-size: 40px; line-height: 76px; font-weight: 600; text-align: center; }
.actions .back { background: #f20036; }

footer { margin: 100px 1px 0; height: 134px; padding-top: 26px; background: #4e5558; color: #fefefe; }
.bar { display: flex; height: 46px; padding-left: 798px; }
.bar > * { flex: none; }
.search-small { width: 447px; height: 46px; margin: 0; border: 0; border-radius: 4px; }
.search-small span { width: 396px; padding-left: 16px; font-size: 20px; line-height: 46px; }
.search-small i { height: 38px; margin-top: 4px; }
.search-small svg { width: 34px; height: 34px; margin: 6px 0 0 9px; }
.login, .register { font-size: 25px; line-height: 41px; font-weight: 600; letter-spacing: -.350px; }
.login { width: 71px; margin-left: 85px; }
.sep { width: 3px; height: 18px; margin: 12px 21px 0 22px; background: #fefefe; }
.register { width: 99px; }
.bar .social { width: 46px; height: 46px; margin: 0 0 0 22px; background: #fefefe; fill: #4e5558; }
footer p { margin: 16px 0 0; text-align: center; font-family: "Liberation Sans", sans-serif; font-size: 18.360px; line-height: 22px; }
```
